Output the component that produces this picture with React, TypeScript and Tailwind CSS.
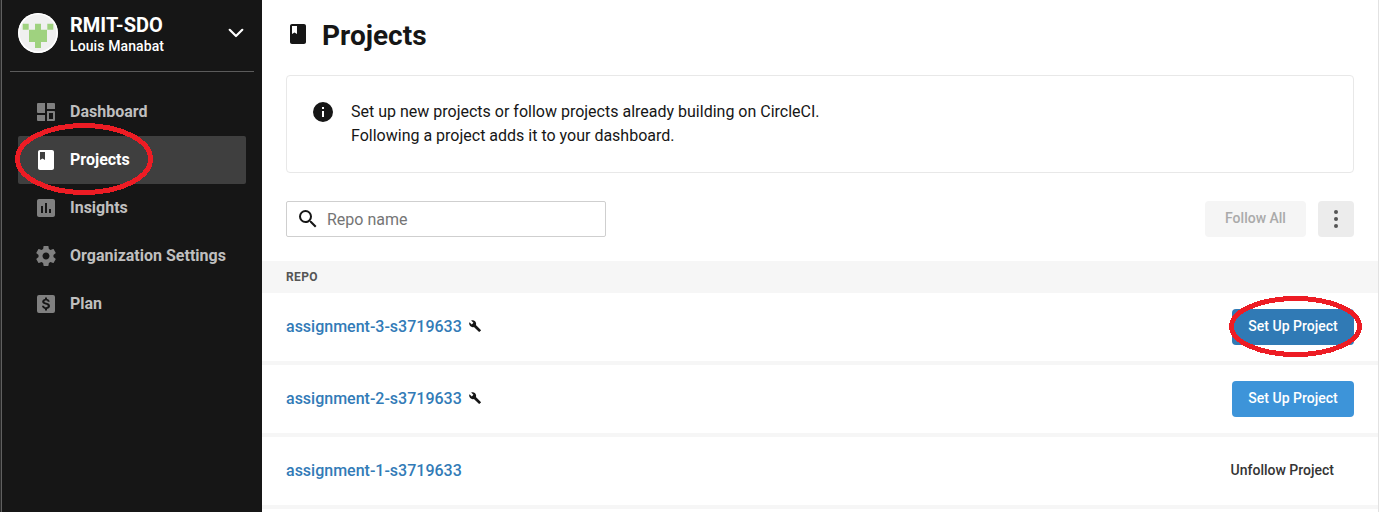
import type { ReactNode } from "react";

type IconProps = { className?: string };

function Icon({ className = "size-6", children }: IconProps & { children: ReactNode }) {
  return (
    <svg viewBox="0 0 24 24" fill="currentColor" className={`shrink-0 ${className}`} aria-hidden="true">
      {children}
    </svg>
  );
}

function BookIcon({ className }: IconProps) {
  return (
    <Icon className={className}>
      <path
        fillRule="evenodd"
        d="M6 2h12c1.1 0 2 .9 2 2v16c0 1.1-.9 2-2 2H6c-1.1 0-2-.9-2-2V4c0-1.1.9-2 2-2zm0 2v8l2.5-1.600L11 12V4H6z"
      />
    </Icon>
  );
}

function DashboardIcon() {
  return (
    <Icon>
      <path d="M4 3h7v10H4a1 1 0 0 1-1-1V4a1 1 0 0 1 1-1zM13 3h7a1 1 0 0 1 1 1v5h-8zM3 15h8v6H4a1 1 0 0 1-1-1z" />
      <path fillRule="evenodd" d="M13 11h7a1 1 0 0 1 1 1v8a1 1 0 0 1-1 1h-7zm2 2v6h4v-6z" />
    </Icon>
  );
}

function InsightsIcon() {
  return (
    <Icon>
      <path d="M19 3H5c-1.1 0-2 .9-2 2v14c0 1.1.9 2 2 2h14c1.1 0 2-.9 2-2V5c0-1.1-.9-2-2-2zM9 17H7v-7h2v7zm4 0h-2V7h2v10zm4 0h-2v-4h2v4z" />
    </Icon>
  );
}

function GearIcon() {
  return (
    <Icon>
      <path d="M19.430 12.980c.04-.32.070-.64.070-.98s-.03-.66-.07-.98l2.110-1.650c.19-.15.240-.42.120-.64l-2-3.460c-.12-.22-.39-.3-.61-.22l-2.490 1c-.52-.4-1.080-.73-1.690-.98l-.38-2.650C14.460 2.180 14.250 2 14 2h-4c-.25 0-.46.18-.49.42l-.38 2.650c-.61.25-1.170.59-1.690.98l-2.490-1c-.23-.09-.49 0-.61.22l-2 3.460c-.13.22-.07.49.12.64l2.110 1.650c-.04.32-.07.65-.07.98s.03.66.07.98l-2.110 1.650c-.19.15-.24.42-.12.64l2 3.460c.12.22.39.3.61.22l2.490-1c.52.4 1.080.73 1.690.98l.38 2.650c.03.24.24.42.49.42h4c.25 0 .46-.18.49-.42l.38-2.650c.61-.25 1.170-.59 1.690-.98l2.490 1c.23.09.49 0 .61-.22l2-3.460c.12-.22.07-.49-.12-.64l-2.110-1.650zM12 15.500c-1.930 0-3.500-1.570-3.500-3.500s1.570-3.500 3.500-3.500 3.500 1.570 3.500 3.500-1.570 3.500-3.500 3.500z" />
    </Icon>
  );
}

function PlanIcon() {
  return (
    <Icon>
      <path
        fillRule="evenodd"
        d="M5 3h14a2 2 0 0 1 2 2v14a2 2 0 0 1-2 2H5a2 2 0 0 1-2-2V5a2 2 0 0 1 2-2zm6 2.500v1.400c-1.700.3-2.800 1.300-2.800 2.700 0 1.800 1.500 2.500 3.400 3 1.700.4 2.200.8 2.200 1.500 0 .7-.6 1.200-1.800 1.200-1.300 0-1.900-.6-2-1.500H8c.1 1.700 1.300 2.800 3 3.100v1.600h2v-1.600c1.800-.3 3-1.300 3-2.900 0-1.900-1.500-2.700-3.600-3.200-1.500-.4-2-.7-2-1.300 0-.6.6-1.100 1.600-1.100 1.100 0 1.600.5 1.700 1.400h2c-.1-1.500-1-2.600-2.700-2.900V5.500z"
      />
    </Icon>
  );
}

function WrenchIcon() {
  return (
    <Icon className="size-3">
      <path d="M23.700 19.800 13.800 9.900c1-2.500.4-5.400-1.600-7.400C10.100.4 6.900-.1 4.300 1.100l4.500 4.500-3.200 3.200L1 4.300C-.3 6.900.3 10.100 2.400 12.200c2 2 4.900 2.600 7.400 1.600l9.900 9.900c.4.4 1.100.4 1.500 0l2.500-2.500c.5-.4.5-1.100 0-1.400z" />
    </Icon>
  );
}

function Avatar() {
  return (
    <div className="size-10 overflow-hidden rounded-full bg-[#f0f0f0]">
      <svg viewBox="0 0 40 40" className="size-full" fill="#9fd27f">
        <path d="M4.700 10.700h6v6h-6zM17 10.700h6v6h6v12.300h-6v6h-6v-6h-6V16.700h6zM29.300 10.700h6v6h-6z" />
        <circle cx="20" cy="20" r="19.200" fill="none" stroke="#fff" strokeWidth="1.600" />
      </svg>
    </div>
  );
}

const navItems = [
  { label: "Dashboard", icon: <DashboardIcon /> },
  { label: "Projects", icon: <BookIcon />, active: true },
  { label: "Insights", icon: <InsightsIcon /> },
  { label: "Organization Settings", icon: <GearIcon /> },
  { label: "Plan", icon: <PlanIcon /> },
];

function Sidebar() {
  return (
    <aside className="w-[262px] shrink-0 border-l border-[#2b2b2b] bg-[#161616]">
      <div className="h-full border-l border-[#606060]">
        <header className="mr-2 ml-2 flex h-[72px] items-start border-b border-[#5b5b5b] pt-[13px] pl-2">
          <Avatar />
          <div className="ml-3 flex-1 text-white">
            <div className="text-[20px] leading-6 font-bold">RMIT-SDO</div>
            <div className="text-[14px] leading-[18px] font-medium tracking-[0.1px]">Louis Manabat</div>
          </div>
          <svg viewBox="0 0 24 24" className="mt-2 mr-[6px] size-6" fill="none" stroke="#fff" strokeWidth="2.200" strokeLinecap="round" strokeLinejoin="round">
            <path d="m5.700 8.800 6.300 6.200 6.300-6.200" />
          </svg>
        </header>
        <nav className="mr-4 ml-4 pt-4">
          {navItems.map((item) => (
            <a
              key={item.label}
              className={
                item.active
                  ? "flex h-12 items-center rounded-[2px] bg-[#3f3f3f] pl-4 text-white"
                  : "flex h-12 items-center rounded-[2px] pl-4 text-[#808080]"
              }
            >
              {item.icon}
              <span
                className={
                  item.active
                    ? "ml-3 pb-px text-[16px] leading-6 font-bold text-white"
                    : "ml-3 pb-px text-[16px] leading-6 font-bold text-[#bfbfbf]"
                }
              >
                {item.label}
              </span>
            </a>
          ))}
        </nav>
      </div>
    </aside>
  );
}

const repos = [
  { name: "assignment-3-s3719633", setup: true, highlighted: true },
  { name: "assignment-2-s3719633", setup: true, highlighted: false },
  { name: "assignment-1-s3719633", setup: false, highlighted: false },
];

function RepoRow({ name, setup, highlighted }: (typeof repos)[number]) {
  return (
    <div className="flex h-[72px] items-start justify-between border-b-4 border-[#f6f6f6] pt-4 pr-6 pl-6">
      <div className="flex h-9 items-center pb-[2px]">
        <a className="pt-[2px] text-[16px] leading-6 font-medium text-[#327bb7]">{name}</a>
        {setup && (
          <span className="ml-[7px] text-[#161616]">
            <WrenchIcon />
          </span>
        )}
      </div>
      {setup ? (
        <button
          className={
            highlighted
              ? "h-9 w-[122px] rounded bg-[#307ab5] pb-[2px] text-[14px] font-medium text-white"
              : "h-9 w-[122px] rounded bg-[#3d94d9] pb-[2px] text-[14px] font-medium text-white"
          }
        >
          Set Up Project
        </button>
      ) : (
        <button className="h-9 pr-5 pb-[2px] text-[14px] font-medium text-[#343434]">Unfollow Project</button>
      )}
    </div>
  );
}

export default function App() {
  return (
    <div className="relative flex h-[512px] w-[1379px] overflow-hidden bg-white font-['Roboto',sans-serif] text-[#161616]">
      <Sidebar />
      <main className="min-w-0 flex-1 border-r border-[#e2e2e2]">
        <div className="pr-6 pl-6">
          <div className="flex h-[75px] items-start pt-[18px]">
            <BookIcon className="mt-[4px] size-6" />
            <h1 className="mt-px ml-3 text-[28px] leading-[34px] font-bold">Projects</h1>
          </div>
          <div className="flex h-[98px] items-start rounded border border-[#e8e8e8] pt-6 pl-6">
            <Icon>
              <path d="M12 2a10 10 0 1 0 0 20 10 10 0 0 0 0-20zm1 15h-2v-6h2v6zm0-8h-2V7h2v2z" />
            </Icon>
            <p className="ml-4 text-[16px] leading-6">
              Set up new projects or follow projects already building on CircleCI.
              <br />
              Following a project adds it to your dashboard.
            </p>
          </div>
          <div className="flex h-[88px] items-start pt-7">
            <div className="flex h-9 w-80 items-center rounded-[2px] border border-[#cfcfcf] pl-[9px]">
              <Icon>
                <path d="M15.500 14h-.79l-.28-.27A6.471 6.471 0 0 0 16 9.500 6.500 6.500 0 1 0 9.500 16c1.610 0 3.090-.59 4.230-1.570l.27.28v.79l5 4.990L20.490 19l-4.990-5zm-6 0C7.010 14 5 11.990 5 9.500S7.010 5 9.500 5 14 7.010 14 9.500 11.990 14 9.500 14z" />
              </Icon>
              <span className="ml-[7px] pt-[2px] text-[16px] leading-6 text-[#757575]">Repo name</span>
            </div>
            <button className="ml-auto h-9 w-[101px] rounded bg-[#f5f5f5] pb-[2px] text-[14px] font-medium text-[#aaaaaa]">
              Follow All
            </button>
            <button className="ml-3 flex size-9 items-center justify-center rounded bg-[#ececec] text-[#555]">
              <Icon>
                <circle cx="12" cy="5" r="2" />
                <circle cx="12" cy="12" r="2" />
                <circle cx="12" cy="19" r="2" />
              </Icon>
            </button>
          </div>
        </div>
        <div className="h-8 bg-[#f6f6f6] pl-6 text-[12px] leading-8 font-bold tracking-[0.4px] text-[#555]">REPO</div>
        {repos.map((repo) => (
          <RepoRow key={repo.name} {...repo} />
        ))}
      </main>
      <svg
        className="pointer-events-none absolute inset-0"
        width="1379"
        height="512"
        fill="none"
        stroke="#ed1c24"
        strokeWidth="5"
        shapeRendering="crispEdges"
      >
        <ellipse cx="84" cy="159" rx="66.500" ry="33.500" />
        <ellipse cx="1295.500" cy="326.500" rx="64" ry="28" />
      </svg>
    </div>
  );
}
